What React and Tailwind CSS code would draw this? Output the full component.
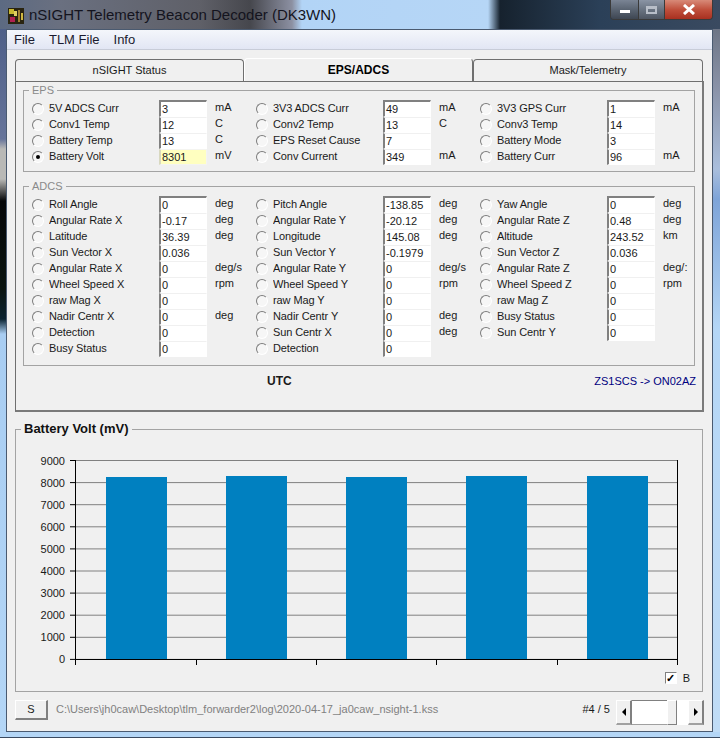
import { ChevronLeft } from 'lucide-react'

const eps = [
  [
    ['5V ADCS Curr', '3', 'mA'],
    ['Conv1 Temp', '12', 'C'],
    ['Battery Temp', '13', 'C'],
    ['Battery Volt', '8301', 'mV', true],
  ],
  [
    ['3V3 ADCS Curr', '49', 'mA'],
    ['Conv2 Temp', '13', 'C'],
    ['EPS Reset Cause', '7', ''],
    ['Conv Current', '349', 'mA'],
  ],
  [
    ['3V3 GPS Curr', '1', 'mA'],
    ['Conv3 Temp', '14', ''],
    ['Battery Mode', '3', ''],
    ['Battery Curr', '96', 'mA'],
  ],
]

const adcs = [
  [
    ['Roll Angle', '0', 'deg'],
    ['Angular Rate X', '-0.17', 'deg'],
    ['Latitude', '36.39', 'deg'],
    ['Sun Vector X', '0.036', ''],
    ['Angular Rate X', '0', 'deg/s'],
    ['Wheel Speed X', '0', 'rpm'],
    ['raw Mag X', '0', ''],
    ['Nadir Centr X', '0', 'deg'],
    ['Detection', '0', ''],
    ['Busy Status', '0', ''],
  ],
  [
    ['Pitch Angle', '-138.85', 'deg'],
    ['Angular Rate Y', '-20.12', 'deg'],
    ['Longitude', '145.08', 'deg'],
    ['Sun Vector Y', '-0.1979', ''],
    ['Angular Rate Y', '0', 'deg/s'],
    ['Wheel Speed Y', '0', 'rpm'],
    ['raw Mag Y', '0', ''],
    ['Nadir Centr Y', '0', 'deg'],
    ['Sun Centr X', '0', 'deg'],
    ['Detection', '0', ''],
  ],
  [
    ['Yaw Angle', '0', 'deg'],
    ['Angular Rate Z', '0.48', 'deg'],
    ['Altitude', '243.52', 'km'],
    ['Sun Vector Z', '0.036', ''],
    ['Angular Rate Z', '0', 'deg/:'],
    ['Wheel Speed Z', '0', 'rpm'],
    ['raw Mag Z', '0', ''],
    ['Busy Status', '0', ''],
    ['Sun Centr Y', '0', ''],
  ],
]

const bars = [
  { x: 90, top: 47 },
  { x: 210, top: 46 },
  { x: 330, top: 47 },
  { x: 450, top: 46 },
  { x: 571, top: 46 },
]
const ticks = [59.5, 180.5, 300.5, 420.5, 541.5, 661.5]
const levels = [9000, 8000, 7000, 6000, 5000, 4000, 3000, 2000, 1000, 0]

function Radio({ on }) {
  return (
    <span className="flex h-[12px] w-[12px] items-center justify-center rounded-full border border-t-[#7d7d7d] border-l-[#7d7d7d] border-r-white border-b-white bg-[#f6f6f6]">
      {on && <span className="h-[4px] w-[4px] rounded-full bg-black" />}
    </span>
  )
}

function Row({ item, first }) {
  const [label, value, unit, on] = item
  return (
    <div className="flex h-[16px] items-center">
      <div className="flex h-[16px] w-[17px] items-center pb-px">
        <Radio on={on} />
      </div>
      <div className="w-[110px] truncate pb-[2px] leading-[14px] tracking-[-0.1px] text-[#1a1a1a]">{label}</div>
      {first ? (
        <div className="-mt-px h-[17px] w-[48px] border-t-2 border-l-2 border-r border-b border-t-[#808080] border-l-[#808080] border-r-white border-b-white bg-white pl-px leading-[15px] text-[#1a1a1a]">
          {value}
        </div>
      ) : (
        <div className={on
          ? 'h-[16px] w-[48px] border border-l-2 border-[#f4f4f0] border-l-[#d8d8c0] bg-[#ffffc0] pl-px leading-[14px] text-[#1a1a1a]'
          : 'h-[16px] w-[48px] border-t border-r border-b border-l-2 border-t-[#f0f0f0] border-r-white border-b-white border-l-[#808080] bg-white pl-px leading-[15px] text-[#1a1a1a]'}>
          {value}
        </div>
      )}
      <div className="ml-[8px] w-[41px] pb-[3px] leading-[13px] text-[#1a1a1a]">{unit}</div>
    </div>
  )
}

function Group({ title, columns, className }) {
  return (
    <div className={`relative ml-[7px] w-[672px] border border-[#a3a3a3] pt-[10px] pb-[6px] pl-[8px] ${className}`}>
      <span className="absolute -top-[8px] left-[5px] bg-[#f0f0f0] px-[3px] leading-[14px] text-[#8a8a8a]">{title}</span>
      <div className="flex">
        {columns.map((col, i) => (
          <div key={i} className="flex w-[224px] flex-col">
            {col.map((item, j) => (
              <Row key={j} item={item} first={j === 0} />
            ))}
          </div>
        ))}
      </div>
    </div>
  )
}

function Tab({ children, width }) {
  return (
    <div className={`flex h-[22px] items-center justify-center rounded-t-[4px] border-t border-l border-r border-[#6f6f6f] bg-[#f0f0f0] pb-px text-[#1a1a1a] ${width}`}>
      {children}
    </div>
  )
}

function Chart() {
  return (
    <svg width="686" height="235" className="block">
      {levels.map((v, i) => {
        const y = 30.5 + i * 22.1
        return (
          <g key={v}>
            <line x1="59" x2="661" y1={y} y2={y} stroke="#808080" />
            <line x1="54" x2="60" y1={y} y2={y} stroke="#000" />
            <text x="49" y={y + 4} textAnchor="end" fontSize="11" fill="#1a1a1a" fontFamily="'Liberation Sans', sans-serif">{v}</text>
          </g>
        )
      })}
      {bars.map(b => (
        <rect key={b.x} x={b.x} y={b.top} width="61" height={229.5 - b.top} fill="#0080c0" />
      ))}
      <line x1="59.5" x2="59.5" y1="30" y2="235" stroke="#000" />
      <line x1="661.5" x2="661.5" y1="30" y2="235" stroke="#000" />
      <line x1="59" x2="662" y1="229.5" y2="229.5" stroke="#000" />
      {ticks.map(x => (
        <line key={x} x1={x} x2={x} y1="229" y2="235" stroke="#000" />
      ))}
    </svg>
  )
}

function Scroller() {
  return (
    <div className="flex h-[25px] w-[88px] bg-white">
      <div className="flex w-[16px] items-center justify-center border-r-2 border-b-2 border-r-[#808080] border-b-[#a0a0a0] border-t border-l border-t-white border-l-white bg-[#f0f0f0]">
        <span className="h-0 w-0 border-y-[4px] border-r-[4px] border-y-transparent border-r-black" />
      </div>
      <div className="w-[35px] border-t border-b border-t-[#808080] border-b-[#a0a0a0] bg-white" />
      <div className="w-[10px] border-t border-b border-l border-r border-t-white border-b-[#808080] border-l-white border-r-[#808080] bg-[#f0f0f0]" />
      <div className="w-[11px] bg-white" />
      <div className="flex w-[16px] items-center justify-center border-r-2 border-b-2 border-r-[#808080] border-b-[#a0a0a0] border-t border-l border-t-white border-l-white bg-[#f0f0f0]">
        <span className="h-0 w-0 border-y-[4px] border-l-[4px] border-y-transparent border-l-black" />
      </div>
    </div>
  )
}

export default function App() {
  return (
    <div className="flex h-[738px] w-[720px] flex-col overflow-hidden bg-[#b4d6f6] font-['Liberation_Sans',sans-serif] text-[11px]">
      {/* Title bar */}
      <div className="flex h-[29px] shrink-0 items-start bg-[linear-gradient(90deg,#5c6a82_0px,#6a7080_60px,#5f6068_200px,#46474d_250px,#8c90a2_292px,#b2d4f6_302px,#b6d6f6_488px,#16222e_500px,#2b4058_600px,#3a4a60_720px)] pl-[8px]">
        <svg width="16" height="16" className="mt-[8px] shrink-0">
          <rect width="16" height="16" fill="#2a2410" />
          <rect x="1" y="1" width="5" height="5" fill="#c8b830" />
          <rect x="6" y="3" width="3" height="5" fill="#e0d060" />
          <rect x="2" y="9" width="5" height="5" fill="#b02050" />
          <rect x="10" y="2" width="2" height="12" fill="#a08030" />
          <rect x="13" y="5" width="2" height="7" fill="#d0b840" />
        </svg>
        <div className="ml-[5px] mt-[6px] text-[15px] leading-[18px] text-[#14141e]">nSIGHT Telemetry Beacon Decoder (DK3WN)</div>
        <div className="ml-auto mr-[7px] flex h-[20px] overflow-hidden rounded-b-[4px] border-r border-b border-l border-[#3a3a3a]">
          <div className="flex w-[28px] items-center justify-center border-r border-[#3a3a3a] bg-[linear-gradient(180deg,#7a8494,#5a6472_50%,#3e4652)]">
            <span className="mt-[4px] h-[3px] w-[10px] bg-white" />
          </div>
          <div className="flex w-[26px] items-center justify-center border-r border-[#3a3a3a] bg-[linear-gradient(180deg,#8a94a4,#6a7482_50%,#4e5662)]">
            <span className="h-[8px] w-[11px] border-2 border-t-[3px] border-[#b8bec8]" />
          </div>
          <div className="flex w-[47px] items-center justify-center bg-[linear-gradient(180deg,#d88a78,#c0503c_50%,#a83020)]">
            <svg width="14" height="11" viewBox="0 0 14 11">
              <path d="M2 1 L12 10 M12 1 L2 10" stroke="#fff" strokeWidth="3" />
            </svg>
          </div>
        </div>
      </div>

      <div className="flex min-h-0 flex-1">
        <div className="w-[6px] shrink-0 bg-[linear-gradient(180deg,#4e5f88_0px,#66749a_110px,#b9b9b6_120px,#b9b9b6_150px,#050608_172px,#0a1410_260px,#0a2230_290px,#a8cdf2_305px,#b4d6f6_100%)]" />

        {/* Client area */}
        <div className="flex h-[703px] w-[707px] shrink-0 flex-col border-t border-l border-r border-b border-[#4a5a70] bg-[#f0f0f0]">
          {/* Menu */}
          <div className="flex h-[20px] shrink-0 items-center gap-[14px] border-b border-[#c8ccd8] bg-[linear-gradient(180deg,#f4f6fb,#e2e6f4)] pl-[7px] text-[13px] text-[#1a1a2e]">
            <span>File</span>
            <span>TLM File</span>
            <span>Info</span>
          </div>

          {/* Tabs */}
          <div className="relative z-10 ml-[8px] mt-[9px] flex h-[22px] w-[688px] items-end">
            <Tab width="w-[229px]">nSIGHT Status</Tab>
            <div className="flex h-[23px] w-[229px] items-center justify-center rounded-t-[4px] border-t border-l border-r border-t-white border-l-white border-r-[#6f6f6f] bg-[#f0f0f0] text-[12px] font-bold text-black">
              EPS/ADCS
            </div>
            <Tab width="w-[230px]">Mask/Telemetry</Tab>
          </div>

          {/* Tab panel */}
          <div className="ml-[8px] h-[331px] w-[689px] shrink-0 border-t border-l border-r-2 border-b-2 border-t-[#6f6f6f] border-l-[#6f6f6f] border-r-[#7a7a7a] border-b-[#7a7a7a] pt-[8px]">
            <Group title="EPS" columns={eps} />
            <Group title="ADCS" columns={adcs} className="mt-[14px] pb-[8px]" />
            <div className="mt-[6px] flex items-center justify-between pl-[251px] pr-[6px]">
              <span className="text-[12px] font-bold text-[#1a1a1a]">UTC</span>
              <span className="text-[#000080]">ZS1SCS -&gt; ON02AZ</span>
            </div>
          </div>

          {/* Chart */}
          <div className="relative ml-[8px] mt-[17px] h-[263px] w-[688px] shrink-0 border border-[#a3a3a3]">
            <span className="absolute -top-[9px] left-[5px] bg-[#f0f0f0] px-[3px] text-[13px] font-bold leading-[16px] text-[#111]">Battery Volt (mV)</span>
            <Chart />
            <div className="mt-[5px] flex items-center justify-end pr-[12px]">
              <span className="flex h-[12px] w-[12px] items-center justify-center border border-[#808080] border-r-white border-b-white bg-white text-[11px] font-bold leading-none text-black">✓</span>
              <span className="ml-[6px] text-[#1a1a1a]">B</span>
            </div>
          </div>

          {/* Footer */}
          <div className="ml-[8px] mt-[8px] flex w-[689px] items-start">
            <div className="flex h-[20px] w-[33px] items-center justify-center border border-r-2 border-b-2 border-t-[#fff] border-l-[#fff] border-r-[#808080] border-b-[#808080] bg-[#f0f0f0] text-[#1a1a1a]">S</div>
            <span className="ml-[8px] mt-[1px] text-[#808080]">C:\Users\jh0caw\Desktop\tlm_forwarder2\log\2020-04-17_ja0caw_nsight-1.kss</span>
            <span className="ml-auto mr-[6px] mt-[1px] text-[#1a1a1a]">#4 / 5</span>
            <Scroller />
          </div>
        </div>

        <div className="w-[7px] shrink-0 bg-[linear-gradient(180deg,#6e7686_0px,#8a93a8_60px,#a9bedc_140px,#7ea4d8_170px,#b4d6f6_300px,#c0dcf6_100%)]" />
      </div>
      <div className="h-[6px] shrink-0 border-b border-[#3a4a60] bg-[#b4d6f6]" />
    </div>
  )
}
